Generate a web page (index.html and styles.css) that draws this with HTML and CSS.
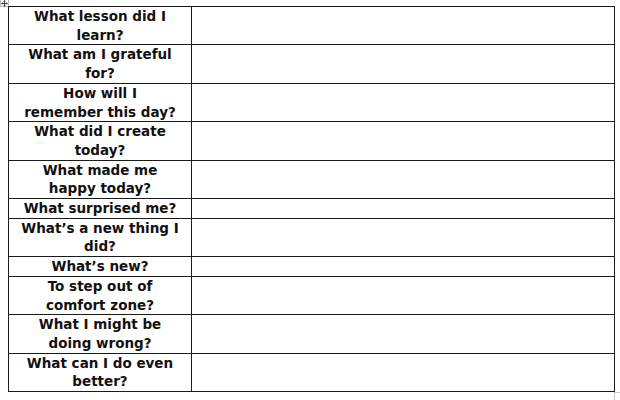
FILE: index.html
```html
<!DOCTYPE html>
<html>
<head>
<meta charset="utf-8">
<link rel="stylesheet" href="styles.css">
</head>
<body>
<div class="page">
  <div class="move-handle">
    <svg width="9" height="7" viewBox="0 0 9 7">
      <rect x="0.5" y="-0.5" width="8" height="7" fill="#fff" stroke="#b8b8b8"/>
      <path d="M4.5 0.5 V6.5 M1.5 3.5 H7.5" stroke="#444" stroke-width="1" fill="none"/>
      <path d="M3.5 1.5 L4.5 0.5 L5.5 1.5 M3.5 5.5 L4.5 6.5 L5.5 5.5 M2.5 2.5 L1.5 3.5 L2.5 4.5 M6.5 2.5 L7.5 3.5 L6.5 4.5" stroke="#444" stroke-width="0.8" fill="none"/>
    </svg>
  </div>
  <div class="table-wrap">
    <table class="journal">
      <colgroup><col class="col-q"><col class="col-a"></colgroup>
      <tbody>
        <tr class="two"><td class="q">What lesson did I<br>learn?</td><td></td></tr>
        <tr class="two"><td class="q">What am I grateful<br>for?</td><td></td></tr>
        <tr class="two"><td class="q">How will I<br>remember this day?</td><td></td></tr>
        <tr class="two"><td class="q">What did I create<br>today?</td><td></td></tr>
        <tr class="two"><td class="q">What made me<br>happy today?</td><td></td></tr>
        <tr class="one"><td class="q">What surprised me?</td><td></td></tr>
        <tr class="two"><td class="q">What’s a new thing I<br>did?</td><td></td></tr>
        <tr class="one"><td class="q">What’s new?</td><td></td></tr>
        <tr class="two"><td class="q">To step out of<br>comfort zone?</td><td></td></tr>
        <tr class="two"><td class="q">What I might be<br>doing wrong?</td><td></td></tr>
        <tr class="two"><td class="q">What can I do even<br>better?</td><td></td></tr>
      </tbody>
    </table>
    <div class="resize-mark"></div>
  </div>
</div>
</body>
</html>
```
FILE: styles.css
```css
html, body {
  margin: 0;
  padding: 0;
  background: #ffffff;
}

.page {
  position: relative;
  width: 620px;
  height: 400px;
  padding: 6px 0 0 8px;
  box-sizing: border-box;
}

.move-handle {
  position: absolute;
  left: 0;
  top: 0;
  width: 9px;
  height: 7px;
  line-height: 0;
}

.table-wrap {
  position: relative;
  width: 606px;
}

.journal {
  border-collapse: collapse;
  width: 606px;
  table-layout: fixed;
  font-family: "DejaVu Sans", "Verdana", sans-serif;
  font-weight: bold;
  font-size: 13.5px;
  color: #111;
}

.col-q { width: 183px; }
.col-a { width: 423px; }

.journal td {
  border: 1px solid #1a1a1a;
  padding: 0 2px;
  vertical-align: top;
}

.journal .q {
  text-align: center;
  line-height: 18.7px;
  white-space: nowrap;
}

.journal tr.two td { height: 37.4px; }
.journal tr.one td { height: 18.7px; }

.resize-mark {
  position: absolute;
  right: -7px;
  bottom: -8px;
  width: 6px;
  height: 7px;
  border-left: 1px solid #c8c8c8;
  border-top: 1px solid #c8c8c8;
}
```
